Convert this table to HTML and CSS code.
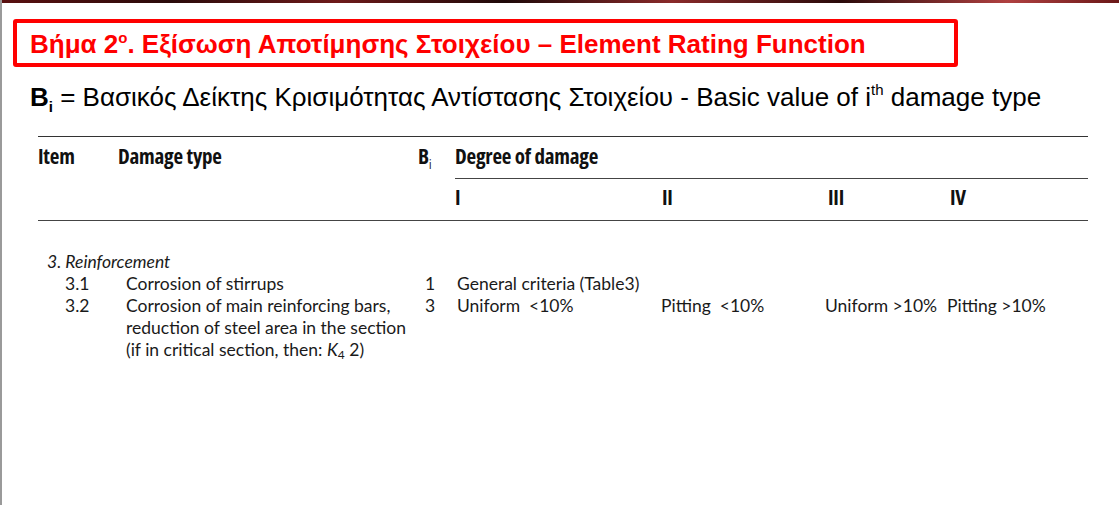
FILE: index.html
```html
<!DOCTYPE html>
<html lang="el">
<head>
<meta charset="utf-8">
<title>Element Rating Function</title>
<link rel="stylesheet" href="styles.css">
</head>
<body>
<div class="slide">
  <div class="topbar"></div>
  <div class="content">
    <div class="title-box">
      <h1 class="title">Βήμα 2<sup>ο</sup>. Εξίσωση Αποτίμησης Στοιχείου – Element Rating Function</h1>
    </div>
    <p class="subtitle"><b>B</b><sub class="sub-i">i</sub> = Βασικός Δείκτης Κρισιμότητας Αντίστασης Στοιχείου - Basic value of i<sup class="sup-th">th</sup> damage type</p>

    <div class="table">
      <div class="thead">
        <div class="th c-item">Item</div>
        <div class="th c-type">Damage type</div>
        <div class="th c-b">B<sub>i</sub></div>
        <div class="th c-degree">Degree of damage</div>
        <div class="th2 c-d1">I</div>
        <div class="th2 c-d2">II</div>
        <div class="th2 c-d3">III</div>
        <div class="th2 c-d4">IV</div>
      </div>
      <div class="tbody">
        <div class="group">3. Reinforcement</div>
        <div class="row">
          <div class="num">3.1</div>
          <div class="desc">Corrosion of stirrups</div>
          <div class="bval">1</div>
          <div class="deg deg-wide">General criteria (Table3)</div>
        </div>
        <div class="row">
          <div class="num">3.2</div>
          <div class="desc">Corrosion of main reinforcing bars,<br>reduction of steel area in the section<br>(if in critical section, then: <i>K</i><sub class="k-sub">4</sub> 2)</div>
          <div class="bval">3</div>
          <div class="deg">Uniform &nbsp;&lt;10%</div>
          <div class="deg">Pitting &nbsp;&lt;10%</div>
          <div class="deg">Uniform &gt;10%</div>
          <div class="deg">Pitting &gt;10%</div>
        </div>
      </div>
    </div>
  </div>
</div>
</body>
</html>
```
FILE: styles.css
```css
* { box-sizing: border-box; }
html, body { margin: 0; padding: 0; background: #fff; }
body { width: 1119px; height: 505px; overflow: hidden; }

.slide {
  width: 1119px;
  height: 505px;
  border-left: 2px solid #9a9a9a;
  display: flex;
  flex-direction: column;
}
.topbar {
  height: 3px;
  background: linear-gradient(90deg, #5a1010 0%, #2a0a0a 15%, #6e1a1a 30%, #1e0808 45%, #8a2a2a 60%, #2a0a0a 75%, #b04040 90%, #6a1818 100%);
}
.content { padding: 16px 0 0 11px; }

.title-box {
  width: 945px;
  height: 48px;
  border: 4px solid #ff0000;
  border-radius: 3px;
  padding-left: 13px;
  padding-top: 1px;
  display: flex;
  align-items: center;
}
.title {
  margin: 0;
  font-family: "Liberation Sans", Arial, sans-serif;
  font-weight: bold;
  font-size: 26px;
  color: #ff0000;
  line-height: 1;
  white-space: nowrap;
}
.title sup { font-size: 15px; vertical-align: 10px; line-height: 0; }

.subtitle {
  margin: 12px 0 0 17px;
  font-family: "Liberation Sans", Arial, sans-serif;
  font-size: 26px;
  color: #000;
  line-height: 36px;
  white-space: nowrap;
}
.subtitle b { font-weight: bold; }
.sub-i { font-size: 15px; vertical-align: -6px; line-height: 0; font-weight: bold; }
.sup-th { font-size: 15px; vertical-align: 11px; line-height: 0; }

.table { margin: 21px 0 0 25px; width: 1050px; }

.thead {
  display: grid;
  grid-template-columns: 80px 300px 37px 207px 166px 122px 138px;
  grid-template-rows: 42px 41px;
  border-top: 1.5px solid #333;
  border-bottom: 1.5px solid #444;
  font-family: "Open Sans", "DejaVu Sans Condensed", sans-serif;
  font-stretch: 75%;
  font-weight: bold;
  font-size: 21px;
  letter-spacing: -0.2px;
  color: #111;
}
.th { padding-top: 5px; grid-row: 1; }
.th sub { font-size: 12px; vertical-align: -5px; line-height: 0; font-weight: normal; }
.c-item { grid-column: 1; }
.c-type { grid-column: 2; }
.c-b { grid-column: 3; }
.c-degree { grid-column: 4 / 8; border-bottom: 1.5px solid #444; }
.th2 { grid-row: 2; padding-top: 4px; }
.c-d1 { grid-column: 4; }
.c-d2 { grid-column: 5; }
.c-d3 { grid-column: 6; }
.c-d4 { grid-column: 7; }

.tbody {
  padding-top: 30px;
  font-family: "Lato", "Open Sans", sans-serif;
  font-size: 17.5px;
  line-height: 22px;
  color: #1a1a1a;
}
.group { font-style: italic; padding-left: 9px; }
.row {
  display: grid;
  grid-template-columns: 27px 61px 299px 32px 204px 164px 122px 141px;
}
.num { grid-column: 2; }
.desc { grid-column: 3; white-space: nowrap; }
.bval { grid-column: 4; }
.deg { white-space: nowrap; }
.deg-wide { grid-column: 5 / 9; }
.k-sub { font-size: 12px; vertical-align: -3px; line-height: 0; }
```
